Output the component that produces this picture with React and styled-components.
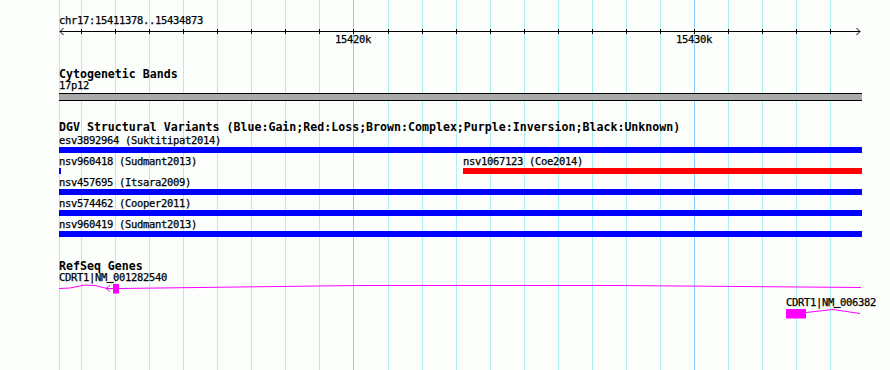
import React from "react";
import styled, { createGlobalStyle } from "styled-components";

// panel geometry
const START_PX = 59;
const TRACK_WIDTH = 803;

// one grid line per kb, 15412k .. 15434k
const KB_FIRST = 15412;
const KBS = Array.from({ length: 23 }, (_, i) => KB_FIRST + i);
const MAJOR = [15420, 15430];
const kbToX = (kb) => Math.floor(81.4 + (kb - KB_FIRST) * 34.07);

const BLUE = "#0000ff";
const RED = "#ff0000";
const MAGENTA = "#ff00ff";

const dgvRows = [
  [{ id: "esv3892964", study: "Suktitipat2014", left: 0, width: 803, color: BLUE }],
  [
    { id: "nsv960418", study: "Sudmant2013", left: 0, width: 2, color: BLUE },
    { id: "nsv1067123", study: "Coe2014", left: 404, width: 399, color: RED },
  ],
  [{ id: "nsv457695", study: "Itsara2009", left: 0, width: 803, color: BLUE }],
  [{ id: "nsv574462", study: "Cooper2011", left: 0, width: 803, color: BLUE }],
  [{ id: "nsv960419", study: "Sudmant2013", left: 0, width: 803, color: BLUE }],
];

const genes = [
  {
    symbol: "CDRT1",
    accession: "NM_001282540",
    left: 0,
    width: 803,
    exons: [{ x: 54, w: 6 }],
    introns: ["0,4.5 11,4 26,1 36,1.5 48,4.5", "60,4.5 300,1.5 560,1.5 802,3.5"],
    arrow: { tip: 47, to: 54 },
  },
  {
    symbol: "CDRT1",
    accession: "NM_006382",
    left: 727,
    width: 76,
    exons: [{ x: 0, w: 20 }],
    introns: ["20,3.5 47,0.5 74,4.5"],
  },
];

const GlobalStyle = createGlobalStyle`
  html, body {
    margin: 0;
    background: #fbfefb;
  }
`;

const Panel = styled.div`
  position: relative;
  width: 890px;
  height: 370px;
  overflow: hidden;
  background: #fbfefb;
  color: #000;
  font-family: "DejaVu Sans Mono", "Liberation Mono", monospace;
`;

const GridLayer = styled.svg`
  position: absolute;
  top: 0;
  left: 0;
  width: 890px;
  height: 370px;
`;

const Tracks = styled.div`
  position: relative;
  display: flex;
  flex-direction: column;
  margin-left: ${START_PX}px;
  width: ${TRACK_WIDTH}px;
`;

const Ruler = styled.div`
  display: flex;
  flex-direction: column;
  padding-top: 15px;
`;

const SmallText = styled.div`
  font-size: 10.5px;
  letter-spacing: -0.32px;
  line-height: 11px;
  height: 11px;
  white-space: nowrap;
  -webkit-text-stroke: 0.25px #000;
`;

// the mono font's underscore is a hairline at this size: lift and thicken it
const Underscore = styled.span`
  position: relative;
  top: -1.5px;
  -webkit-text-stroke: 0.7px #000;
`;

const Axis = styled.svg`
  display: block;
  width: ${TRACK_WIDTH}px;
  height: 8px;
  overflow: visible;
`;

const TickRow = styled.div`
  position: relative;
  height: 11px;
`;

const TickLabel = styled(SmallText)`
  position: absolute;
  top: 0;
  transform: translateX(-50%);
`;

const Track = styled.section`
  display: flex;
  flex-direction: column;
  margin-top: ${(p) => p.$gap}px;
`;

const TrackTitle = styled.h2`
  margin: 0;
  height: 12px;
  font-size: 11.6px;
  line-height: 12px;
  font-weight: bold;
  white-space: nowrap;
`;

const Band = styled.div`
  box-sizing: border-box;
  margin-top: 2px;
  height: 8px;
  border-top: 1px solid #000;
  border-bottom: 1px solid #000;
  background: #a9a9a9;
`;

const Rows = styled.div`
  display: flex;
  flex-direction: column;
  margin-top: ${(p) => p.$gap}px;
`;

const Row = styled.div`
  position: relative;
  height: ${(p) => p.$h}px;
`;

const Feature = styled.div`
  position: absolute;
  top: 0;
  display: flex;
  flex-direction: column;
`;

const Bar = styled.div`
  margin-top: 1px;
  height: 6px;
  background: ${(p) => p.$color};
`;

const GeneGlyph = styled.svg`
  display: block;
  margin-top: 1px;
  height: 10px;
  overflow: visible;
`;

const Grid = () => (
  <GridLayer viewBox="0 0 890 370">
    <line x1={59.5} x2={59.5} y1={0} y2={370} stroke="#afeeee" />
    {KBS.map((kb) => {
      const x = kbToX(kb) + 0.5;
      return (
        <line
          key={kb}
          x1={x}
          x2={x}
          y1={0}
          y2={370}
          stroke={MAJOR.includes(kb) ? "#87cefa" : "#afeeee"}
        />
      );
    })}
  </GridLayer>
);

const Gene = ({ gene }) => {
  const [prefix, rest] = gene.accession.split("_");
  return (
    <Feature style={{ left: gene.left, width: gene.width }}>
      <SmallText>
        {gene.symbol}|{prefix}
        <Underscore>_</Underscore>
        {rest}
      </SmallText>
      <GeneGlyph width={gene.width} viewBox={`0 0 ${gene.width} 10`}>
        {gene.introns.map((pts) => (
          <polyline key={pts} points={pts} fill="none" stroke={MAGENTA} />
        ))}
        {gene.arrow && (
          <>
            <line
              x1={gene.arrow.tip}
              x2={gene.arrow.to}
              y1={4.5}
              y2={4.5}
              stroke={MAGENTA}
            />
            <polyline
              points={`${gene.arrow.tip + 4},1.5 ${gene.arrow.tip},4.5 ${gene.arrow.tip + 4},7.5`}
              fill="none"
              stroke={MAGENTA}
            />
          </>
        )}
        {gene.exons.map((e) => (
          <rect key={e.x} x={e.x} y={0} width={e.w} height={9.5} fill={MAGENTA} />
        ))}
      </GeneGlyph>
    </Feature>
  );
};

const App = () => {
  return (
    <>
      <GlobalStyle />
      <Panel>
        <Grid />
        <Tracks>
          <Ruler>
            <SmallText>chr17:15411378..15434873</SmallText>
            <Axis viewBox={`0 0 ${TRACK_WIDTH} 8`}>
              <line x1={1} x2={801} y1={5.5} y2={5.5} stroke="#000" />
              <polyline points="4.5,2 1,5.5 4.5,9" fill="none" stroke="#000" />
              <polyline points="797.5,2 801,5.5 797.5,9" fill="none" stroke="#000" />
              {KBS.map((kb) => {
                const x = kbToX(kb) - START_PX + 0.5;
                return <line key={kb} x1={x} x2={x} y1={3} y2={8} stroke="#000" />;
              })}
            </Axis>
            <TickRow>
              {MAJOR.map((kb) => (
                <TickLabel key={kb} style={{ left: kbToX(kb) - START_PX }}>
                  {kb}k
                </TickLabel>
              ))}
            </TickRow>
          </Ruler>

          <Track $gap={23}>
            <TrackTitle>Cytogenetic Bands</TrackTitle>
            <SmallText>17p12</SmallText>
            <Band />
          </Track>

          <Track $gap={20}>
            <TrackTitle>
              DGV Structural Variants
              (Blue:Gain;Red:Loss;Brown:Complex;Purple:Inversion;Black:Unknown)
            </TrackTitle>
            <Rows $gap={2}>
              {dgvRows.map((row, i) => (
                <Row key={i} $h={21}>
                  {row.map((f) => (
                    <Feature key={f.id} style={{ left: f.left, width: f.width }}>
                      <SmallText>
                        {f.id} ({f.study})
                      </SmallText>
                      <Bar $color={f.color} />
                    </Feature>
                  ))}
                </Row>
              ))}
            </Rows>
          </Track>

          <Track $gap={20}>
            <TrackTitle>RefSeq Genes</TrackTitle>
            <Rows $gap={0}>
              {genes.map((g) => (
                <Row key={g.accession} $h={25}>
                  <Gene gene={g} />
                </Row>
              ))}
            </Rows>
          </Track>
        </Tracks>
      </Panel>
    </>
  );
};

export default App;
